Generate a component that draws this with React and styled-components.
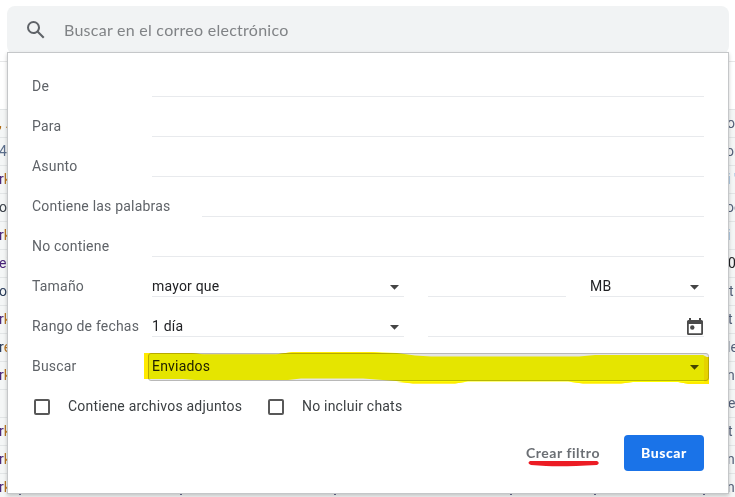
import React from "react";
import styled, { createGlobalStyle } from "styled-components";

const GlobalStyle = createGlobalStyle`
  * { box-sizing: border-box; }
  body { margin: 0; background: #fff; overflow: hidden; font-family: Roboto, sans-serif; }
`;

const Page = styled.div`
  position: relative;
  width: 735px;
  height: 497px;
  overflow: hidden;
  padding-top: 6px;
`;
const SearchBar = styled.header`
  display: flex;
  align-items: center;
  gap: 16px;
  width: 722px;
  height: 48px;
  margin-left: 7px;
  padding-left: 17px;
  border-radius: 8px;
  background: #f1f3f4;
`;
const SearchHint = styled.span`
  font: 400 16px/24px Lato, sans-serif;
  letter-spacing: 0.26px;
  color: #808386;
  white-space: nowrap;
`;
const Toolbar = styled.div`
  height: 48px;
  margin-top: 7px;
  border-top: 1px solid #e6e7e8;
`;
const MailRow = styled.div`
  display: flex;
  justify-content: space-between;
  height: 28px;
  border-top: 1px solid #e2e5e6;
  background: #f4f6f6;
  font-size: 14px;
  line-height: 27px;
  white-space: pre;
`;
const Snippet = styled.span`
  width: ${(p) => (p.$end ? "7px" : "8px")};
  overflow: hidden;
  color: ${(p) => p.$color};
  text-indent: ${(p) => p.$shift || 0}px;
`;
const Accent = styled.span`
  color: #b8741f;
`;
const Panel = styled.section`
  position: absolute;
  left: 7px;
  top: 52px;
  width: 722px;
  height: 442px;
  padding: 13px 24px 0;
  border: 1px solid #c5c7c9;
  background: #fff;
  box-shadow: 0 2px 4px rgba(0, 0, 0, 0.2);
`;
const Field = styled.div`
  display: flex;
  align-items: center;
  height: 40px;
  font-size: 14px;
  letter-spacing: 0.2px;
`;
const Label = styled.label`
  flex: none;
  width: ${(p) => p.$width || 120}px;
  color: #5f6368;
  white-space: nowrap;
`;
const Input = styled.div`
  display: flex;
  align-items: center;
  justify-content: space-between;
  width: ${(p) => (p.$width ? p.$width + "px" : "auto")};
  flex: ${(p) => (p.$width ? "none" : "1")};
  height: 22px;
  margin-right: ${(p) => p.$gap || 0}px;
  padding-right: ${(p) => (p.$select ? 5 : 0)}px;
  border-bottom: 1px solid #e8eaed;
  color: #202124;
`;
const Selected = styled.div`
  position: relative;
  display: flex;
  align-items: center;
  justify-content: space-between;
  flex: none;
  width: 561px;
  height: 28px;
  margin: 1px 0 0 -4px;
  padding: 0 9px 2px 3px;
  border: 1px solid #b8b8b8;
  border-radius: 3px;
  background: #e5e5e5;
  color: #202124;
`;
const Marker = styled.svg`
  position: absolute;
  left: -6px;
  top: -4px;
  mix-blend-mode: multiply;
`;
const ArrowIcon = styled.svg`
  flex: none;
  margin-top: 3px;
`;
const CalendarIcon = styled.svg`
  flex: none;
  margin-top: 2px;
`;
const Options = styled.div`
  display: flex;
  align-items: center;
  height: 40px;
  padding-left: 2px;
  font-size: 14px;
  letter-spacing: 0.2px;
  color: #3c4043;
`;
const Option = styled.label`
  display: flex;
  align-items: center;
  gap: 18px;
  width: 234px;
  white-space: nowrap;
`;
const Box = styled.span`
  width: 16px;
  height: 16px;
  margin-top: 2px;
  border: 2px solid #585858;
  border-radius: 2px;
`;
const Actions = styled.footer`
  display: flex;
  justify-content: flex-end;
  align-items: center;
  gap: 24px;
  height: 36px;
  margin-top: 9px;
`;
const CreateFilter = styled.button`
  position: relative;
  padding: 0;
  border: 0;
  background: none;
  color: #6b6f74;
  font: 700 14px/20px Lato, sans-serif;
  letter-spacing: 0.55px;
  white-space: nowrap;
`;
const Underline = styled.svg`
  position: absolute;
  left: 2px;
  top: 17px;
`;
const Submit = styled.button`
  width: 80px;
  height: 36px;
  padding: 0;
  border: 0;
  border-radius: 4px;
  background: #1a73e8;
  color: #fff;
  font: 900 14px/20px Lato, sans-serif;
  letter-spacing: 0.55px;
`;
const Descenders = styled.svg`
  position: absolute;
  left: 0;
  top: 493px;
`;

const rows = [
  [", ", ".", "#b06a12", "o", "#55617a", -1],
  ["4", "", "#5c6f8c", "or", "#55617a", -2],
  ["r", "k", "#4a257a", "i '", "#3f83c4", -1],
  ["o", "", "#3d434b", "oc", "#55617a", -2],
  ["r", "k", "#4a257a", "i", "#3f83c4", -1],
  ["e", "'", "#4a257a", "0", "#202124", 0],
  ["o", "", "#2c3e5c", "t", "#55617a", 1],
  ["r", "k", "#4a257a", "t", "#55617a", 0],
  ["r", "e", "#2c3e5c", "le", "#55617a", -1],
  ["r", "k", "#4a257a", "n", "#55617a", -1],
  ["", "", "#4a257a", "e", "#55617a", 0],
  ["r", "k", "#4a257a", "t", "#55617a", 0],
  ["r", "k", "#4a257a", "n", "#55617a", -1],
  ["r", "k", "#4a257a", "n", "#55617a", -1],
];

const descenderSpots = [19, 180, 334, 510, 594, 703];

const Arrow = () => (
  <ArrowIcon width="9" height="5" viewBox="0 0 9 5">
    <path d="M0 0h9L4.5 4.8z" fill="#444" />
  </ArrowIcon>
);

export default function App() {
  return (
    <Page>
      <GlobalStyle />
      <SearchBar>
        <svg width="24" height="24" viewBox="0 0 24 24" fill="#5f6368">
          <path d="M20.49 19l-5.73-5.73C15.53 12.2 16 10.91 16 9.5A6.5 6.5 0 1 0 9.5 16c1.41 0 2.7-.47 3.77-1.24L19 20.49 20.49 19zM5 9.5C5 7.01 7.01 5 9.5 5S14 7.01 14 9.5 11.99 14 9.5 14 5 11.99 5 9.5z" />
        </svg>
        <SearchHint>Buscar en el correo electrónico</SearchHint>
      </SearchBar>
      <Toolbar />
      {rows.map(([start, accent, startColor, end, endColor, shift], i) => (
        <MailRow key={i}>
          <Snippet $color={startColor} $shift={-1}>
            {start}
            <Accent>{accent}</Accent>
          </Snippet>
          <Snippet $end $color={endColor} $shift={shift}>{end}</Snippet>
        </MailRow>
      ))}
      <Panel>
        <Field><Label>De</Label><Input /></Field>
        <Field><Label>Para</Label><Input /></Field>
        <Field><Label>Asunto</Label><Input /></Field>
        <Field><Label $width={170}>Contiene las palabras</Label><Input /></Field>
        <Field><Label>No contiene</Label><Input /></Field>
        <Field>
          <Label>Tamaño</Label>
          <Input $width={252} $gap={24} $select>mayor que<Arrow /></Input>
          <Input $width={138} $gap={24} />
          <Input $select>MB<Arrow /></Input>
        </Field>
        <Field>
          <Label>Rango de fechas</Label>
          <Input $width={252} $gap={24} $select>1 día<Arrow /></Input>
          <Input>
            <span />
            <CalendarIcon width="18" height="18" viewBox="0 0 18 18">
              <path fillRule="evenodd" d="M3 0h2v2h8V0h2v2h.5A1.5 1.5 0 0 1 17 3.500v12a1.500 1.500 0 0 1-1.500 1.500h-13A1.500 1.500 0 0 1 1 15.500v-12A1.500 1.500 0 0 1 2.500 2H3zM2.800 6v9.200h12.400V6z" fill="#4a4a4a" />
              <circle cx="6.300" cy="9.500" r="2.200" fill="#4a4a4a" />
            </CalendarIcon>
          </Input>
        </Field>
        <Field>
          <Label>Buscar</Label>
          <Selected>
            Enviados<Arrow />
            <Marker width="570" height="36" viewBox="0 0 570 36">
              <path d="M1 3H48L62 4.500H132L150 2H228L254 3L272 5.500L288 6.500H436L452 5H560L566 8V34H546L535 32H490L478 33.500H440L425 31.500H325L312 33.500H270L253 31L220 28.500H158L145 30H52L40 29H1z" fill="#ffff00" />
              <path d="M1 3H48L62 4.500H132L150 2H228L250 4H6V29H1zM561 7h5v27h-20l-11-2h26zM254 32h68l-10 1.500H270zM428 32h62l-12 1.500h-38z" fill="#ffea00" />
            </Marker>
          </Selected>
        </Field>
        <Options>
          <Option><Box />Contiene archivos adjuntos</Option>
          <Option><Box />No incluir chats</Option>
        </Options>
        <Actions>
          <CreateFilter>
            Crear filtro
            <Underline width="72" height="8" viewBox="0 0 72 8">
              <path d="M2 1H69Q72.500 3 69 5Q35 7 18 6L3 5Q-1.500 3 2 1z" fill="#ec1c24" />
            </Underline>
          </CreateFilter>
          <Submit>Buscar</Submit>
        </Actions>
      </Panel>
      <Descenders width="735" height="2" fill="#5a5a7a">
        {descenderSpots.map((x) => (
          <rect key={x} x={x} y="1" width="2" height="1" />
        ))}
      </Descenders>
    </Page>
  );
}
